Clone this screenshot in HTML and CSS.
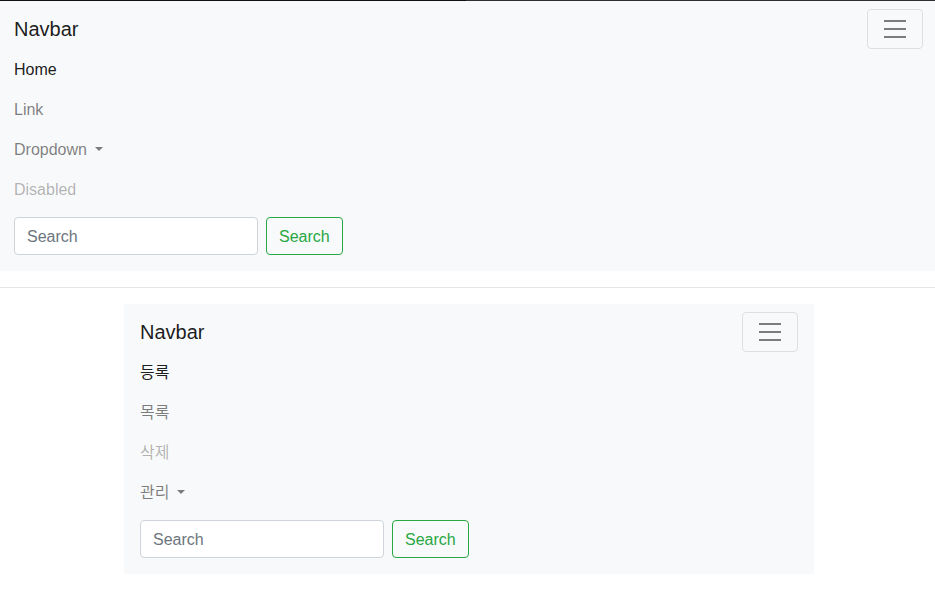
FILE: index.html
```html
<!DOCTYPE html>
<html lang="ko">
<head>
<meta charset="utf-8">
<title>Navbar</title>
<link rel="stylesheet" href="styles.css">
</head>
<body>
<div class="topline"></div>
<nav class="navbar navbar-full">
  <div class="navbar-head">
    <a class="brand" href="#">Navbar</a>
    <button class="toggler" type="button" aria-label="Toggle navigation">
      <svg class="toggler-icon" viewBox="0 0 30 30" width="30" height="30"><path stroke="rgba(0,0,0,0.5)" stroke-width="2" stroke-miterlimit="10" d="M4 7h22M4 15h22M4 23h22"/></svg>
    </button>
  </div>
  <ul class="nav">
    <li><a class="nav-link active" href="#">Home</a></li>
    <li><a class="nav-link" href="#">Link</a></li>
    <li><a class="nav-link dropdown-toggle" href="#">Dropdown</a></li>
    <li><a class="nav-link disabled" href="#">Disabled</a></li>
  </ul>
  <form class="search-form">
    <input class="search-input" type="search" placeholder="Search">
    <button class="search-btn" type="button">Search</button>
  </form>
</nav>
<hr class="divider">
<div class="container">
  <nav class="navbar navbar-boxed">
    <div class="navbar-head">
      <a class="brand" href="#">Navbar</a>
      <button class="toggler" type="button" aria-label="Toggle navigation">
        <svg class="toggler-icon" viewBox="0 0 30 30" width="30" height="30"><path stroke="rgba(0,0,0,0.5)" stroke-width="2" stroke-miterlimit="10" d="M4 7h22M4 15h22M4 23h22"/></svg>
      </button>
    </div>
    <ul class="nav">
      <li><a class="nav-link active" href="#">등록</a></li>
      <li><a class="nav-link" href="#">목록</a></li>
      <li><a class="nav-link disabled" href="#">삭제</a></li>
      <li><a class="nav-link dropdown-toggle" href="#">관리</a></li>
    </ul>
    <form class="search-form">
      <input class="search-input" type="search" placeholder="Search">
      <button class="search-btn" type="button">Search</button>
    </form>
  </nav>
</div>
</body>
</html>
```
FILE: styles.css
```css
* { box-sizing: border-box; }
html, body { margin: 0; padding: 0; }
body {
  font-family: "Liberation Sans", Arial, "Noto Sans CJK KR", sans-serif;
  font-size: 16px;
  line-height: 1.5;
  color: #212529;
  background: #fff;
}
.topline {
  height: 1px;
  background: linear-gradient(to right, #111 466px, #2f2f2f 466px);
}
.navbar {
  background: #f8f9fa;
  display: flex;
  flex-direction: column;
}
.navbar-full { padding: 8px 12px 8px 14px; }
.navbar-boxed { padding: 8px 16px; }
.navbar-head {
  display: flex;
  justify-content: space-between;
  align-items: center;
}
.brand {
  display: inline-block;
  padding: 5px 0;
  font-size: 20px;
  line-height: 30px;
  color: rgba(0,0,0,0.9);
  text-decoration: none;
}
.toggler {
  display: flex;
  align-items: center;
  justify-content: center;
  width: 56px;
  height: 40px;
  padding: 4px 12px;
  background: transparent;
  border: 1px solid rgba(0,0,0,0.1);
  border-radius: 4px;
}
.toggler-icon { display: block; }
.nav {
  list-style: none;
  margin: 0;
  padding: 0;
  display: flex;
  flex-direction: column;
}
.nav-link {
  display: block;
  padding: 9px 0 7px;
  line-height: 24px;
  color: rgba(0,0,0,0.5);
  text-decoration: none;
}
.nav-link.active { color: rgba(0,0,0,0.9); }
.nav-link.disabled { color: rgba(0,0,0,0.3); }
.dropdown-toggle::after {
  content: "";
  display: inline-block;
  margin-left: 8px;
  vertical-align: 0.255em;
  border-top: 0.3em solid;
  border-right: 0.3em solid transparent;
  border-left: 0.3em solid transparent;
  border-bottom: 0;
}
.search-form {
  display: flex;
  align-items: center;
  margin: 8px 0;
}
.search-input {
  width: 244px;
  height: 38px;
  margin-right: 8px;
  padding: 7px 12px 5px;
  font-family: inherit;
  font-size: 16px;
  line-height: 1.5;
  color: #495057;
  background: #fff;
  border: 1px solid #ced4da;
  border-radius: 4px;
}
.search-input::placeholder { color: #6c757d; opacity: 1; }
.search-btn {
  height: 38px;
  padding: 7px 12px 5px;
  font-family: inherit;
  font-size: 16px;
  line-height: 1.5;
  color: #28a745;
  background: transparent;
  border: 1px solid #28a745;
  border-radius: 4px;
}
.divider {
  margin: 16px 0;
  border: 0;
  border-top: 1px solid rgba(0,0,0,0.1);
}
.container {
  width: 720px;
  margin: 0 auto;
  padding: 0 13.5px 0 16.5px;
}
```
